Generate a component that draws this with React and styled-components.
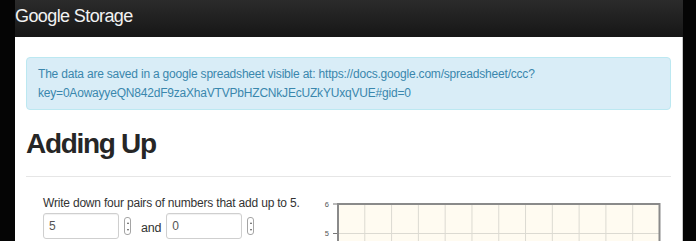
import React, { useState } from 'react';
import styled, { createGlobalStyle } from 'styled-components';

const GlobalStyle = createGlobalStyle`
  html, body {
    margin: 0;
    padding: 0;
    background: #050505;
    overflow: hidden;
  }
  body {
    font-family: "Liberation Sans", Arial, sans-serif;
    color: #333;
  }
`;

const Frame = styled.div`
  display: flex;
  padding: 0 13px 0 15px;
  min-height: 241px;
`;

const Page = styled.div`
  flex: 1;
  display: flex;
  flex-direction: column;
`;

const TopBar = styled.div`
  height: 37px;
  box-sizing: border-box;
  background: linear-gradient(#2b2b2b, #161616);
  color: #f2f2f2;
  font-size: 18px;
  line-height: 33px;
  letter-spacing: -0.6px;
`;

const Content = styled.div`
  flex: 1;
  background: #fff;
  border-right: 1px solid #c8c8c8;
  padding: 20px 11px 0 11px;
`;

const Alert = styled.div`
  background: #d9edf7;
  border: 1px solid #bce8f1;
  border-radius: 4px;
  color: #3a87ad;
  font-size: 12px;
  letter-spacing: -0.2px;
  line-height: 19px;
  padding: 7px 11px 6px;
`;

const Title = styled.h1`
  font-size: 28px;
  font-weight: bold;
  line-height: 36px;
  margin: 16px 0 14px;
  color: #262626;
  letter-spacing: -1.3px;
`;

const Rule = styled.hr`
  border: 0;
  border-top: 1px solid #e6e6e6;
  margin: 0;
`;

const Exercise = styled.div`
  display: flex;
  align-items: flex-start;
  padding: 17px 0 0 17px;
`;

const Form = styled.div`
  width: 275px;
  font-size: 12px;
  letter-spacing: -0.2px;
  line-height: 18px;
`;

const PairRow = styled.div`
  display: flex;
  align-items: center;
  margin-top: 1px;
`;

const NumberBox = styled.input`
  width: 76px;
  height: 26px;
  box-sizing: border-box;
  border: 1px solid #cfcfcf;
  border-radius: 3px;
  box-shadow: inset 0 1px 1px rgba(0, 0, 0, 0.06);
  padding: 0 5px;
  font-family: inherit;
  font-size: 12px;
  color: #555;
  outline: none;
`;

const Spinner = styled.span`
  width: 5px;
  height: 14px;
  margin: 0 ${p => p.$after}px 0 5px;
  border: 1px solid #a5a5a5;
  border-radius: 3px;
  display: flex;
  flex-direction: column;
  align-items: center;
  justify-content: space-around;
  padding: 1px 0;
  box-sizing: content-box;
`;

const Arrow = styled.span`
  width: 0;
  height: 0;
  border-left: 1.5px solid transparent;
  border-right: 1.5px solid transparent;
  ${p => (p.$down ? 'border-top' : 'border-bottom')}: 2px solid #555;
`;

const Joiner = styled.span`
  font-size: 12.5px;
  margin-right: 5px;
  padding-top: 4px;
`;

const Chart = styled.svg`
  display: block;
`;

const COLS = 12;
const LEFT = 20;
const WIDTH = 321.5;
const TOP = 10;
const UNIT = 29.5;

function Graph() {
  const step = WIDTH / COLS;
  const verticals = Array.from({ length: COLS - 1 }, (_, i) => LEFT + step * (i + 1));
  const levels = [6, 5, 4, 3, 2, 1, 0];
  return (
    <Chart width="346" height="230" viewBox="0 0 346 230">
      <rect x={LEFT} y={TOP} width={WIDTH} height={UNIT * 6} fill="#fffbf1" />
      {verticals.map(x => (
        <line key={x} x1={x} y1={TOP} x2={x} y2={TOP + UNIT * 6} stroke="#dcdad2" strokeWidth="1" />
      ))}
      {levels.map((v, i) => {
        const y = TOP + UNIT * i;
        return (
          <g key={v}>
            {i > 0 && <line x1={LEFT} y1={y} x2={LEFT + WIDTH} y2={y} stroke="#dcdad2" strokeWidth="1" />}
            <line x1={LEFT - 5} y1={y} x2={LEFT} y2={y} stroke="#777" strokeWidth="1" />
            <text x={LEFT - 9} y={y + 2.5} fontSize="7.5" fill="#555" textAnchor="end" fontFamily="Liberation Sans, sans-serif">
              {v}
            </text>
          </g>
        );
      })}
      <rect x={LEFT} y={TOP} width={WIDTH} height={UNIT * 6} fill="none" stroke="#8a8a8a" strokeWidth="2" />
    </Chart>
  );
}

export default function App() {
  const [pairs, setPairs] = useState([['5', '0']]);

  const update = (row, col, value) => {
    setPairs(prev => prev.map((p, i) => (i === row ? p.map((v, j) => (j === col ? value : v)) : p)));
  };

  return (
    <>
      <GlobalStyle />
      <Frame>
        <Page>
          <TopBar>Google Storage</TopBar>
          <Content>
            <Alert>
              The data are saved in a google spreadsheet visible at: https://docs.google.com/spreadsheet/ccc?
              <br />
              key=0AowayyeQN842dF9zaXhaVTVPbHZCNkJEcUZkYUxqVUE#gid=0
            </Alert>
            <Title>Adding Up</Title>
            <Rule />
            <Exercise>
              <Form>
                Write down four pairs of numbers that add up to 5.
                {pairs.map((p, i) => (
                  <PairRow key={i}>
                    <NumberBox value={p[0]} onChange={e => update(i, 0, e.target.value)} />
                    <Spinner $after={10}>
                      <Arrow />
                      <Arrow $down />
                    </Spinner>
                    <Joiner>and</Joiner>
                    <NumberBox value={p[1]} onChange={e => update(i, 1, e.target.value)} />
                    <Spinner $after={0}>
                      <Arrow />
                      <Arrow $down />
                    </Spinner>
                  </PairRow>
                ))}
              </Form>
              <Graph />
            </Exercise>
          </Content>
        </Page>
      </Frame>
    </>
  );
}
